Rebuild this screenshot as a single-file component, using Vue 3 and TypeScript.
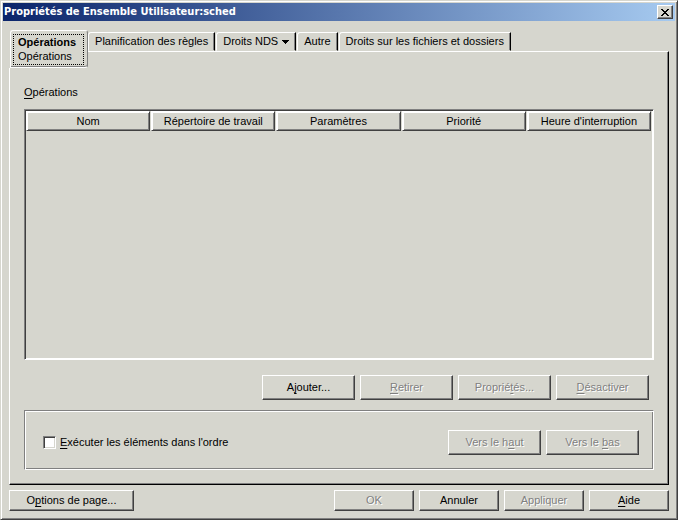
<script setup lang="ts">
import { ref } from 'vue'

interface Action {
  before: string
  key: string
  after: string
  disabled?: boolean
}

const tabs = [
  { label: 'Planification des règles', menu: false },
  { label: 'Droits NDS', menu: true },
  { label: 'Autre', menu: false },
  { label: 'Droits sur les fichiers et dossiers', menu: false },
]

const columns = ['Nom', 'Répertoire de travail', 'Paramètres', 'Priorité', "Heure d'interruption"]

const listActions: Action[] = [
  { before: 'A', key: 'j', after: 'outer...' },
  { before: '', key: 'R', after: 'etirer', disabled: true },
  { before: 'Proprié', key: 't', after: 'és...', disabled: true },
  { before: '', key: 'D', after: 'ésactiver', disabled: true },
]

const moveActions: Action[] = [
  { before: 'Vers le h', key: 'a', after: 'ut', disabled: true },
  { before: 'Vers le ', key: 'b', after: 'as', disabled: true },
]

const footerActions: Action[] = [
  { before: 'OK', key: '', after: '', disabled: true },
  { before: 'Annuler', key: '', after: '' },
  { before: 'Appliquer', key: '', after: '', disabled: true },
  { before: '', key: 'A', after: 'ide' },
]

const ordered = ref(false)
</script>

<template>
  <div class="window">
    <header class="titlebar">
      <h1 class="title">Propriétés de Ensemble Utilisateur:sched</h1>
      <button class="close" type="button" aria-label="Fermer">
        <svg width="8" height="7" viewBox="0 0 8 7" shape-rendering="crispEdges">
          <path
            d="M0 0h2v1h1v1h2v-1h1v-1h2v1h-1v1h-1v1h-1v1h1v1h1v1h1v1h-2v-1h-1v-1h-2v1h-1v1h-2v-1h1v-1h1v-1h1v-1h-1v-1h-1v-1h-1z"
          />
        </svg>
      </button>
    </header>

    <main class="body">
      <div class="tabs" role="tablist">
        <button class="tab active" type="button" role="tab" aria-selected="true">
          <span class="focus"><b>Opérations</b><span>Opérations</span></span>
        </button>
        <button v-for="tab in tabs" :key="tab.label" class="tab" type="button" role="tab" aria-selected="false">
          {{ tab.label }}
          <svg v-if="tab.menu" class="arrow" width="7" height="4" viewBox="0 0 7 4" shape-rendering="crispEdges">
            <path d="M0 0h7v1h-1v1h-1v1h-1v1h-1v-1h-1v-1h-1v-1h-1z" />
          </svg>
        </button>
      </div>

      <section class="panel" role="tabpanel">
        <h2 class="caption"><u>O</u>pérations</h2>
        <div class="list">
          <table class="table">
            <thead>
              <tr>
                <th v-for="column in columns" :key="column" scope="col"><div class="head">{{ column }}</div></th>
              </tr>
            </thead>
          </table>
        </div>

        <div class="list-actions">
          <button v-for="a in listActions" :key="a.after" class="btn" type="button" :disabled="a.disabled">
            {{ a.before }}<u>{{ a.key }}</u>{{ a.after }}
          </button>
        </div>

        <div class="group">
          <label class="check">
            <input v-model="ordered" type="checkbox" />
            <span><u>E</u>xécuter les éléments dans l'ordre</span>
          </label>
          <div class="row">
            <button v-for="a in moveActions" :key="a.before" class="btn" type="button" :disabled="a.disabled">
              {{ a.before }}<u>{{ a.key }}</u>{{ a.after }}
            </button>
          </div>
        </div>
      </section>
    </main>

    <footer class="footer">
      <button class="btn small wide" type="button">O<u>p</u>tions de page...</button>
      <div class="row">
        <button
          v-for="a in footerActions"
          :key="a.before + a.after"
          class="btn small"
          type="button"
          :disabled="a.disabled"
        >
          {{ a.before }}<u>{{ a.key }}</u>{{ a.after }}
        </button>
      </div>
    </footer>
  </div>
</template>

<style>
body {
  background: #d6d6ce;
}
</style>

<style scoped>
* {
  box-sizing: border-box;
}

.window {
  display: flex;
  flex-direction: column;
  min-height: 100vh;
  padding: 1px 1px 8px;
  border: 1px solid;
  border-color: #d6d6ce #404040 #404040 #d6d6ce;
  box-shadow: inset 1px 1px #fff, inset -1px -1px #808080;
  background: #d6d6ce;
  color: #000;
  font: 11px/15px 'Liberation Sans', Arial, sans-serif;
}

button {
  margin: 0;
  padding: 0;
  border: 0;
  border-radius: 0;
  background: #d6d6ce;
  color: inherit;
  font: inherit;
  white-space: nowrap;
}

u {
  text-underline-offset: 2px;
  text-decoration-thickness: 1px;
  text-decoration-skip-ink: none;
}

.titlebar {
  display: flex;
  align-items: center;
  justify-content: space-between;
  height: 18px;
  margin: 1px;
  padding: 0 2px 0 1px;
  background: linear-gradient(to right, #0a246a, #a6caf0);
}

.title {
  margin: 0;
  color: #fff;
  font: bold 11px/18px 'DejaVu Sans Condensed', Tahoma, sans-serif;
}

.close {
  display: flex;
  align-items: center;
  justify-content: center;
  width: 16px;
  height: 14px;
  border: 1px solid;
  border-color: #fff #404040 #404040 #fff;
  box-shadow: inset -1px -1px #808080;
}

.body {
  display: flex;
  flex: 1;
  flex-direction: column;
  padding: 8px 7px 0;
}

.tabs {
  display: flex;
  align-items: flex-start;
  height: 21px;
  padding-left: 1px;
}

.tab {
  height: 19px;
  margin-top: 2px;
  padding: 0 6px;
  border: 1px solid;
  border-color: #fff #000 transparent #fff;
  border-top-left-radius: 3px;
  box-shadow: inset -1px 0 #808080;
}

.tab + .tab {
  margin-left: 1px;
}

.tab.active {
  position: relative;
  height: 38px;
  margin-top: 0;
  padding: 3px 3px 3px 2px;
  border-color: #fff #808080 #fff #fff;
  border-radius: 3px 3px 3px 0;
  box-shadow: inset 0 -1px #808080, -1px 0 #d6d6ce;
}

.tab.active + .tab {
  margin-left: 0;
}

.focus {
  display: flex;
  flex-direction: column;
  height: 31px;
  padding: 0 7px 0 4px;
  border: 1px dotted #000;
  line-height: 14px;
  text-align: left;
}

.arrow {
  margin: 0 0 1px 1px;
}

.panel {
  display: flex;
  flex: 1;
  flex-direction: column;
  padding: 33px 14px 14px;
  border: 1px solid;
  border-color: #fff #000 #000 #fff;
  box-shadow: inset -1px -1px #808080;
}

.caption {
  margin: 0 0 9px;
  font-size: 11px;
  font-weight: normal;
  line-height: 15px;
}

.list {
  flex: 1;
  border: 1px solid;
  border-color: #808080 #fff #fff #808080;
  box-shadow: inset 1px 1px #404040, inset -1px -1px #fff;
  padding: 1px;
}

.table {
  width: 100%;
  border-collapse: collapse;
  table-layout: fixed;
}

.table th {
  padding: 0;
  font-weight: normal;
}

.head {
  height: 20px;
  margin-right: 1px;
  border: 1px solid;
  border-color: #fff #404040 #404040 #fff;
  box-shadow: inset 1px 1px #fff, inset -1px -1px #808080;
  line-height: 19px;
}

.list-actions {
  display: flex;
  justify-content: flex-end;
  gap: 5px;
  padding: 15px 5px 10px;
}

.row {
  display: flex;
  gap: 5px;
}

.btn {
  width: 93px;
  height: 25px;
  border: 1px solid;
  border-color: #fff #404040 #404040 #fff;
  box-shadow: inset -1px -1px #808080;
}

.btn:disabled {
  color: #808080;
  text-shadow: 1px 1px #fff;
}

.btn.small {
  width: 80px;
  height: 21px;
}

.btn.wide {
  width: 125px;
}

.group {
  display: flex;
  align-items: center;
  justify-content: space-between;
  height: 60px;
  padding: 4px 14px 0 18px;
  border: 1px solid;
  border-color: #808080 #fff #fff #808080;
  box-shadow: inset 1px 1px #fff, inset -1px -1px #808080;
}

.check {
  display: flex;
  align-items: center;
  gap: 4px;
}

.check input {
  appearance: none;
  width: 13px;
  height: 13px;
  margin: 0;
  border: 1px solid;
  border-color: #808080 #fff #fff #808080;
  box-shadow: inset 1px 1px #404040, inset -1px -1px #d6d6ce;
  background: #fff;
}

.check input:checked {
  background: radial-gradient(#000 3px, #fff 4px);
}

.footer {
  display: flex;
  justify-content: space-between;
  padding: 5px 7px 0;
}
</style>
